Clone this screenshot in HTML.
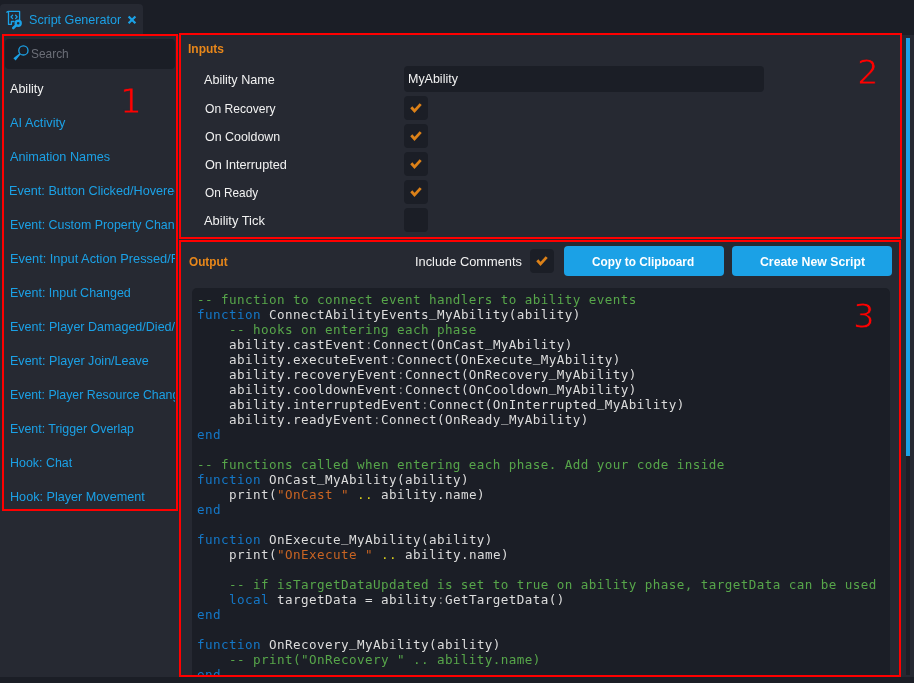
<!DOCTYPE html>
<html>
<head>
<meta charset="utf-8">
<title>Script Generator</title>
<style>
html,body{margin:0;padding:0;}
body{width:914px;height:683px;position:relative;overflow:hidden;background:#262932;font-family:"Liberation Sans",sans-serif;font-size:13px;color:#f2f2f2;}
#w{position:absolute;left:0;top:0;width:914px;height:683px;will-change:transform;}
.abs{position:absolute;}
.tx{position:absolute;white-space:nowrap;font-size:13px;line-height:16px;}
.tx span{display:inline-block;transform-origin:0 50%;}
#topbar{left:0;top:0;width:914px;height:35px;background:#1b1e26;}
#tab{left:0;top:4px;width:143px;height:31px;background:#262932;border-radius:4px 4px 0 0;}
.blue{color:#1ba1e6;}
.grey{color:#6b6e77;}
#botbar{left:0;top:677px;width:914px;height:6px;background:#1b1e26;}
.red{border:2px solid #ff0000;box-sizing:border-box;}
#b1{left:2px;top:34px;width:176px;height:477px;}
#b2{left:179px;top:33px;width:723px;height:206px;}
#b3{left:179px;top:240px;width:722px;height:437px;}
.num{color:#ff0000;font-family:"DejaVu Sans","Liberation Sans",sans-serif;font-size:34px;line-height:33px;font-weight:normal;-webkit-text-stroke:0.8px #262932;}
#search{left:5px;top:39px;width:170px;height:29.5px;background:#1b1e26;border-radius:4px;}
#list{left:4px;top:72px;width:171px;height:437px;overflow:hidden;}
#list .tx{color:#1ba1e6;}
.hdr{color:#e8871a;font-weight:bold;}
.lbl{color:#f2f2f2;}
.cb{width:24px;height:24px;background:#1b1e26;border-radius:4px;}
.cb svg{display:block;}
#field{left:404px;top:66px;width:360px;height:26px;background:#1b1e26;border-radius:4px;}
.btn{top:246px;width:160px;height:30px;background:#1ba1e6;border-radius:4px;}
.btx{color:#fff;font-weight:bold;}
#code{left:192px;top:288px;width:698px;height:387px;background:#1b1e26;border-radius:5px 5px 0 0;overflow:hidden;}
#code pre{margin:0;position:absolute;left:5px;top:3.5px;font-family:"DejaVu Sans Mono","Liberation Mono",monospace;font-size:12.6px;letter-spacing:0.414px;line-height:15px;color:#dcdcdc;}
.u{position:relative;top:-1.2px;}
.c{color:#57a64a;}.k{color:#1478c8;}.s{color:#c86423;}.q{color:#c86423;}.o{color:#d4cc1c;}.p{color:#888;}
#sbtrack{left:906px;top:38px;width:4px;height:637px;background:#1b1e26;}
#sbthumb{left:906px;top:38px;width:4px;height:418px;background:#1ba1e6;}

</style>
</head>
<body>
<div id="w">
<div class="abs" id="topbar"></div>
<div class="abs" id="tab"></div>
<div class="abs tx blue" style="left:28.8px;top:12px;"><span style="transform:scaleX(0.9664)">Script Generator</span></div>
<div class="abs" id="botbar"></div>
<div class="abs" id="search"></div>
<svg class="abs" style="left:0;top:0" width="180" height="72" viewBox="0 0 180 72">
<g fill="none" stroke="#1ba1e6" stroke-width="1.3" stroke-linecap="round" stroke-linejoin="round">
<path d="M6.9 12.3 Q6.9 11.4 8.2 11.4 H19.6 V20 M8.5 11.6 V24.4 H11.4 V21.5 H14"/>
<path d="M12.6 15.2 L11 16.9 L12.6 18.6 M15.6 15.2 L17.2 16.9 L15.6 18.6"/>
</g>
<circle cx="18.2" cy="23.3" r="2.5" fill="none" stroke="#1ba1e6" stroke-width="2.4"/>
<path d="M16 25.4 L13.3 28" stroke="#1ba1e6" stroke-width="2.6" stroke-linecap="round"/>
<path d="M128.6 16.5 L135.4 23.3 M135.4 16.5 L128.6 23.3" stroke="#1ba1e6" stroke-width="2.2" stroke-linecap="butt"/>
<circle cx="23.4" cy="50.4" r="4.6" fill="none" stroke="#1ba1e6" stroke-width="1.3"/>
<path d="M19.6 53.2 L20.6 54.2 L15.6 60.4 L13.4 58.2 Z" fill="#1ba1e6"/>
</svg>

<div class="abs tx grey" style="left:31.2px;top:46px;"><span style="transform:scaleX(0.9152)">Search</span></div>
<div class="abs" id="list">
<div class="tx" style="left:5.8px;top:9px;color:#f2f2f2;"><span style="transform:scaleX(0.9665)">Ability</span></div>
<div class="tx" style="left:6.0px;top:43px;"><span style="transform:scaleX(0.9834)">AI Activity</span></div>
<div class="tx" style="left:6.0px;top:77px;"><span style="transform:scaleX(0.9758)">Animation Names</span></div>
<div class="tx" style="left:5.33px;top:111px;"><span style="transform:scaleX(0.9734)">Event: Button Clicked/Hovered</span></div>
<div class="tx" style="left:5.65px;top:145px;"><span style="transform:scaleX(0.953)">Event: Custom Property Changed</span></div>
<div class="tx" style="left:5.62px;top:179px;"><span style="transform:scaleX(0.984)">Event: Input Action Pressed/Released</span></div>
<div class="tx" style="left:5.65px;top:213px;"><span style="transform:scaleX(0.9605)">Event: Input Changed</span></div>
<div class="tx" style="left:5.64px;top:247px;"><span style="transform:scaleX(0.9638)">Event: Player Damaged/Died/Spawned</span></div>
<div class="tx" style="left:5.64px;top:281px;"><span style="transform:scaleX(0.9651)">Event: Player Join/Leave</span></div>
<div class="tx" style="left:5.65px;top:315px;"><span style="transform:scaleX(0.9484)">Event: Player Resource Changed</span></div>
<div class="tx" style="left:5.65px;top:349px;"><span style="transform:scaleX(0.9531)">Event: Trigger Overlap</span></div>
<div class="tx" style="left:5.64px;top:383px;"><span style="transform:scaleX(0.9562)">Hook: Chat</span></div>
<div class="tx" style="left:5.63px;top:417px;"><span style="transform:scaleX(0.9717)">Hook: Player Movement</span></div>
</div>

<div class="abs tx hdr" style="left:188.0px;top:41px;"><span style="transform:scaleX(0.9235)">Inputs</span></div>
<div class="abs tx lbl" style="left:204.2px;top:72px;"><span style="transform:scaleX(0.9707)">Ability Name</span></div>
<div class="abs tx lbl" style="left:204.6px;top:101px;"><span style="transform:scaleX(0.9298)">On Recovery</span></div>
<div class="abs tx lbl" style="left:204.6px;top:129px;"><span style="transform:scaleX(0.955)">On Cooldown</span></div>
<div class="abs tx lbl" style="left:204.6px;top:157px;"><span style="transform:scaleX(0.9762)">On Interrupted</span></div>
<div class="abs tx lbl" style="left:204.6px;top:185px;"><span style="transform:scaleX(0.908)">On Ready</span></div>
<div class="abs tx lbl" style="left:204.2px;top:213px;"><span style="transform:scaleX(0.9914)">Ability Tick</span></div>

<div class="abs" id="field"></div>
<div class="abs tx lbl" style="left:408.04px;top:71px;"><span style="transform:scaleX(0.9591)">MyAbility</span></div>
<div class="abs cb" style="left:404px;top:96px"><svg width="24" height="24" viewBox="0 0 24 24"><polyline points="7.3,11.25 10.5,14.95 16.7,8.1" fill="none" stroke="#dc8118" stroke-width="2.8" stroke-linejoin="miter"/></svg></div>
<div class="abs cb" style="left:404px;top:124px"><svg width="24" height="24" viewBox="0 0 24 24"><polyline points="7.3,11.25 10.5,14.95 16.7,8.1" fill="none" stroke="#dc8118" stroke-width="2.8" stroke-linejoin="miter"/></svg></div>
<div class="abs cb" style="left:404px;top:152px"><svg width="24" height="24" viewBox="0 0 24 24"><polyline points="7.3,11.25 10.5,14.95 16.7,8.1" fill="none" stroke="#dc8118" stroke-width="2.8" stroke-linejoin="miter"/></svg></div>
<div class="abs cb" style="left:404px;top:180px"><svg width="24" height="24" viewBox="0 0 24 24"><polyline points="7.3,11.25 10.5,14.95 16.7,8.1" fill="none" stroke="#dc8118" stroke-width="2.8" stroke-linejoin="miter"/></svg></div>
<div class="abs cb" style="left:404px;top:208px"></div>

<div class="abs tx hdr" style="left:188.6px;top:254px;"><span style="transform:scaleX(0.9061)">Output</span></div>
<div class="abs tx lbl" style="left:414.82px;top:254px;"><span style="transform:scaleX(0.9863)">Include Comments</span></div>
<div class="abs cb" style="left:530px;top:249px"><svg width="24" height="24" viewBox="0 0 24 24"><polyline points="7.3,11.25 10.5,14.95 16.7,8.1" fill="none" stroke="#dc8118" stroke-width="2.8" stroke-linejoin="miter"/></svg></div>
<div class="abs btn" style="left:564px"></div>
<div class="abs btn" style="left:732px"></div>
<div class="abs tx btx" style="left:592.4px;top:253.5px;"><span style="transform:scaleX(0.9068)">Copy to Clipboard</span></div>
<div class="abs tx btx" style="left:759.8px;top:253.5px;"><span style="transform:scaleX(0.9434)">Create New Script</span></div>

<div class="abs" id="code"><pre><span class="c">-- function to connect event handlers to ability events</span>
<span class="k">function</span> ConnectAbilityEvents<span class="u">_</span>MyAbility(ability)
    <span class="c">-- hooks on entering each phase</span>
    ability.castEvent<span class="p">:</span>Connect(OnCast<span class="u">_</span>MyAbility)
    ability.executeEvent<span class="p">:</span>Connect(OnExecute<span class="u">_</span>MyAbility)
    ability.recoveryEvent<span class="p">:</span>Connect(OnRecovery<span class="u">_</span>MyAbility)
    ability.cooldownEvent<span class="p">:</span>Connect(OnCooldown<span class="u">_</span>MyAbility)
    ability.interruptedEvent<span class="p">:</span>Connect(OnInterrupted<span class="u">_</span>MyAbility)
    ability.readyEvent<span class="p">:</span>Connect(OnReady<span class="u">_</span>MyAbility)
<span class="k">end</span>

<span class="c">-- functions called when entering each phase. Add your code inside</span>
<span class="k">function</span> OnCast<span class="u">_</span>MyAbility(ability)
    print(<span class="q">"</span><span class="s">OnCast </span><span class="q">"</span> <span class="o">..</span> ability.name)
<span class="k">end</span>

<span class="k">function</span> OnExecute<span class="u">_</span>MyAbility(ability)
    print(<span class="q">"</span><span class="s">OnExecute </span><span class="q">"</span> <span class="o">..</span> ability.name)

    <span class="c">-- if isTargetDataUpdated is set to true on ability phase, targetData can be used</span>
    <span class="k">local</span> targetData = ability<span class="p">:</span>GetTargetData()
<span class="k">end</span>

<span class="k">function</span> OnRecovery<span class="u">_</span>MyAbility(ability)
    <span class="c">-- print("OnRecovery " .. ability.name)</span>
<span class="k">end</span>
</pre></div>

<div class="abs" id="sbtrack"></div>
<div class="abs" id="sbthumb"></div>

<div class="abs red" id="b1"></div>
<div class="abs red" id="b2"></div>
<div class="abs red" id="b3"></div>
<div class="abs num" style="left:120px;top:85.4px">1</div>
<div class="abs num" style="left:857px;top:56.4px">2</div>
<div class="abs num" style="left:853px;top:300.4px;-webkit-text-stroke-color:#1b1e26">3</div>
</div>
</body>
</html>
